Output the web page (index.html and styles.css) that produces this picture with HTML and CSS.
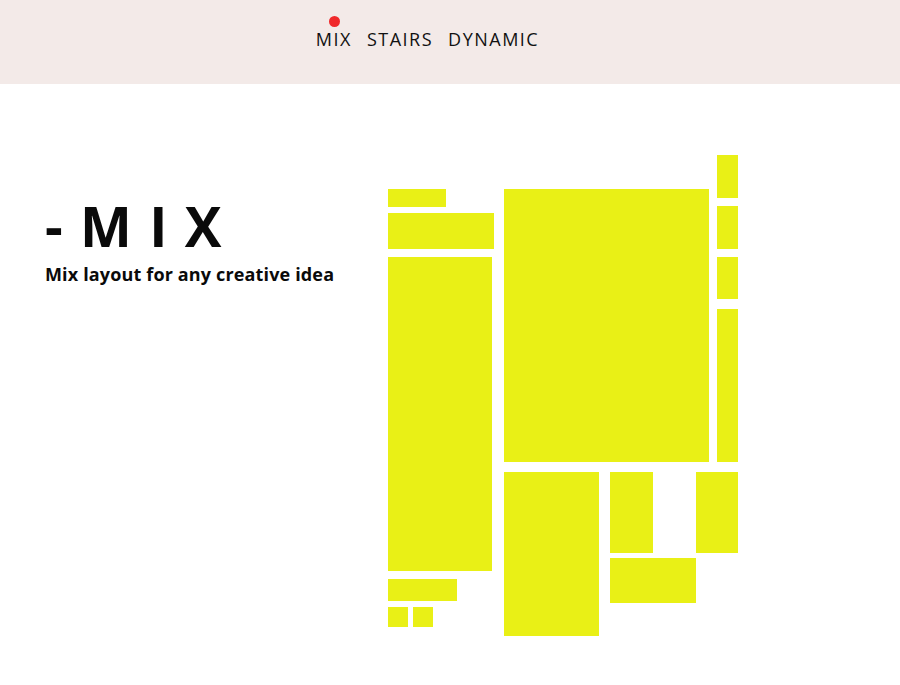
FILE: index.html
```html
<!DOCTYPE html>
<html lang="en">
<head>
<meta charset="utf-8">
<title>Mix layout</title>
<link rel="stylesheet" href="styles.css">
</head>
<body>
<header class="topbar">
  <nav class="nav">
    <a class="nav-item active" href="#">MIX</a>
    <a class="nav-item" href="#">STAIRS</a>
    <a class="nav-item" href="#">DYNAMIC</a>
  </nav>
</header>
<main class="main">
  <section class="intro">
    <h1 class="title">- M I X</h1>
    <p class="subtitle">Mix layout for any creative idea</p>
  </section>
  <section class="mosaic">
    <div class="col-left">
      <div class="tile t-a"></div>
      <div class="tile t-b"></div>
      <div class="tile t-c"></div>
      <div class="tile t-f"></div>
      <div class="pair">
        <div class="tile t-g"></div>
        <div class="tile t-g"></div>
      </div>
    </div>
    <div class="col-right">
      <div class="upper">
        <div class="tile t-d"></div>
        <div class="strip">
          <div class="tile t-e1"></div>
          <div class="tile t-e2"></div>
          <div class="tile t-e3"></div>
          <div class="tile t-e4"></div>
        </div>
      </div>
      <div class="lower">
        <div class="tile t-h"></div>
        <div class="cluster">
          <div class="cluster-row">
            <div class="tile t-i"></div>
            <div class="tile t-j"></div>
          </div>
          <div class="tile t-k"></div>
        </div>
      </div>
    </div>
  </section>
</main>
</body>
</html>
```

FILE: styles.css
```css
* { box-sizing: border-box; }
html, body { margin: 0; padding: 0; background: #ffffff; }
body {
  font-family: "Open Sans", "Liberation Sans", sans-serif;
  color: #111111;
  width: 900px;
  height: 685px;
  overflow: hidden;
}

.topbar {
  height: 84px;
  background: #f3eae8;
  display: flex;
  justify-content: center;
}
.nav {
  display: flex;
  gap: 15px;
  padding-top: 28px;
  margin-right: 45px;
}
.nav-item {
  position: relative;
  font-size: 18px;
  line-height: 22px;
  letter-spacing: 1.5px;
  color: #111111;
  text-decoration: none;
}
.nav-item.active::before {
  content: "";
  position: absolute;
  left: 50%;
  top: -12px;
  width: 11px;
  height: 11px;
  margin-left: -5px;
  border-radius: 50%;
  background: #f0292b;
}

.main {
  display: flex;
  padding-top: 71px;
}
.intro {
  width: 388px;
  padding-left: 45px;
  padding-top: 41px;
}
.title {
  margin: 0;
  font-size: 55px;
  font-weight: 700;
  line-height: 60px;
  letter-spacing: 1.5px;
  color: #0a0a0a;
}
.subtitle {
  margin: 6px 0 0;
  font-size: 18px;
  font-weight: 700;
  line-height: 24px;
  letter-spacing: 0.15px;
  color: #0a0a0a;
}

.mosaic {
  display: flex;
  gap: 10px;
}
.tile { background: #e9f016; flex: none; }

.col-left {
  width: 106px;
  display: flex;
  flex-direction: column;
  align-items: flex-start;
  padding-top: 34px;
}
.t-a { width: 58px; height: 18px; margin-bottom: 6px; }
.t-b { width: 106px; height: 36px; margin-bottom: 8px; }
.t-c { width: 104px; height: 314px; margin-bottom: 8px; }
.t-f { width: 69px; height: 22px; margin-bottom: 6px; }
.pair { display: flex; gap: 5px; }
.t-g { width: 20px; height: 20px; }

.col-right {
  width: 234px;
  display: flex;
  flex-direction: column;
  gap: 10px;
}
.upper {
  display: flex;
  align-items: flex-end;
  gap: 8px;
}
.t-d { width: 205px; height: 273px; }
.strip {
  width: 21px;
  display: flex;
  flex-direction: column;
}
.t-e1 { height: 43px; margin-bottom: 8px; }
.t-e2 { height: 43px; margin-bottom: 8px; }
.t-e3 { height: 42px; margin-bottom: 10px; }
.t-e4 { height: 153px; }

.lower {
  display: flex;
  gap: 11px;
}
.t-h { width: 95px; height: 164px; }
.cluster {
  width: 128px;
  display: flex;
  flex-direction: column;
  gap: 5px;
}
.cluster-row {
  display: flex;
  justify-content: space-between;
}
.t-i { width: 43px; height: 81px; }
.t-j { width: 42px; height: 81px; }
.t-k { width: 86px; height: 45px; }
```
